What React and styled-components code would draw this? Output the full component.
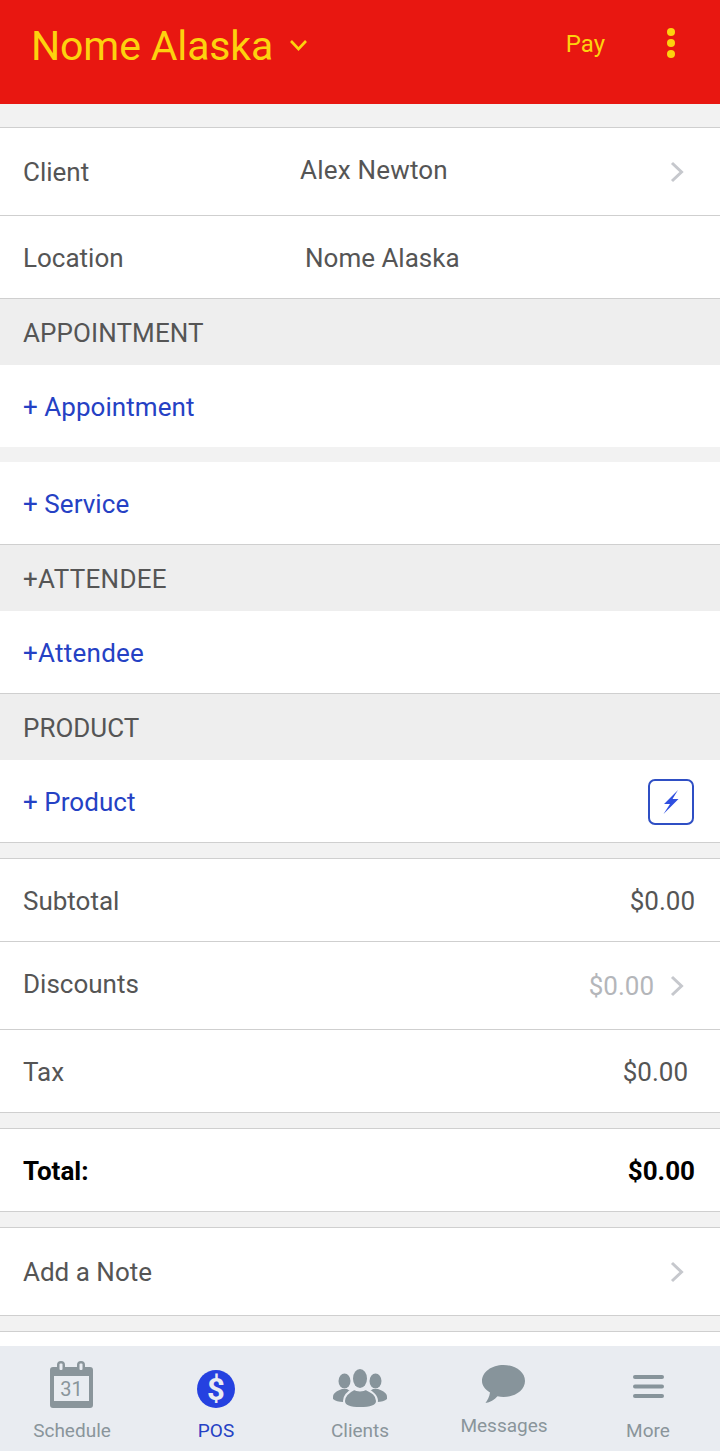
import styled, { createGlobalStyle } from "styled-components";

const GlobalStyle = createGlobalStyle`
  html, body { margin: 0; padding: 0; background: #f2f2f2; }
  * { box-sizing: border-box; }
  body { font-family: Roboto, "Liberation Sans", sans-serif; }
`;

const Screen = styled.div`
  width: 720px;
  height: 1451px;
  display: flex;
  flex-direction: column;
  overflow: hidden;
  background: #f2f2f2;
`;

const Header = styled.header`
  height: 104px;
  background: #e81711;
  color: #fdd20e;
  display: flex;
  align-items: flex-start;
  padding: 0 0 0 31px;
`;

const Title = styled.h1`
  margin: 23px 0 0;
  font-size: 41px;
  line-height: 46px;
  font-weight: 400;
  letter-spacing: -0.15px;
`;

const TitleCaret = styled.svg`
  width: 19px;
  height: 12px;
  margin: 39px 0 0 16px;
`;

const Pay = styled.span`
  margin: 30px 0 0 auto;
  font-size: 24px;
  line-height: 28px;
`;

const Dots = styled.div`
  width: 8px;
  margin: 28px 45px 0 62px;
  display: flex;
  flex-direction: column;
  gap: 3px;
  span {
    width: 8px;
    height: 8px;
    border-radius: 50%;
    background: #fdd20e;
  }
`;

const Gap = styled.div`
  height: ${(p) => p.$h}px;
  flex: none;
  background: ${(p) => p.$bg || "#f2f2f2"};
  border-bottom: ${(p) => (p.$line ? "1px solid #cfcfcf" : "none")};
`;

const Row = styled.div`
  height: ${(p) => p.$h || (p.$tall ? 88 : 83)}px;
  flex: none;
  background: #fff;
  display: flex;
  align-items: center;
  padding: ${(p) => (p.$tall ? 0 : 2)}px 25px 0 23px;
  font-size: 26px;
  color: #555;
  border-bottom: ${(p) => (p.$flat ? "none" : "1px solid #cfcfcf")};
`;

const Label = styled.span`
  width: ${(p) => p.$w || "auto"};
  flex: none;
  margin-top: ${(p) => p.$top || 0}px;
  font-weight: ${(p) => (p.$bold ? 700 : 400)};
  color: ${(p) => (p.$bold ? "#000" : "#555")};
`;

const Value = styled.span`
  margin-top: ${(p) => p.$top || 0}px;
  margin-left: ${(p) => (p.$right ? "auto" : "0")};
  margin-right: ${(p) => p.$mr || 0}px;
  letter-spacing: ${(p) => p.$track || 0}px;
  font-weight: ${(p) => (p.$bold ? 700 : 400)};
  color: ${(p) => (p.$bold ? "#000" : p.$muted ? "#b4b6ba" : "#555")};
`;

const AddLink = styled.span`
  color: #2541c4;
  letter-spacing: ${(p) => p.$track ?? 0.05}px;
`;

const Section = styled.div`
  height: 66px;
  flex: none;
  background: #eeeeee;
  display: flex;
  align-items: center;
  padding: 2px 0 0 23px;
  font-size: 26px;
  letter-spacing: ${(p) => p.$track ?? 0.1}px;
  color: #555;
`;

const Chevron = styled.svg`
  width: 14px;
  height: 22px;
  margin-left: ${(p) => (p.$auto ? "auto" : "16px")};
  margin-right: 11px;
`;

const QuickButton = styled.div`
  width: 46px;
  height: 46px;
  margin-left: auto;
  margin-right: 1px;
  border: 2px solid #2f4fc4;
  border-radius: 7px;
  display: flex;
  align-items: center;
  justify-content: center;
`;

const TabBar = styled.nav`
  height: 105px;
  flex: none;
  background: #e9ecf1;
  display: grid;
  grid-template-columns: repeat(5, 144px);
`;

const Tab = styled.div`
  position: relative;
  display: flex;
  flex-direction: column;
  align-items: center;
  color: ${(p) => (p.$active ? "#2541c4" : "#8a959b")};
`;

const TabIcon = styled.svg`
  margin-top: ${(p) => p.$top}px;
  margin-left: ${(p) => p.$shift || 0}px;
  width: ${(p) => p.$w}px;
  height: ${(p) => p.$h}px;
  flex: none;
`;

const TabText = styled.span`
  position: absolute;
  left: 0;
  right: 0;
  top: ${(p) => p.$top || 73}px;
  text-align: center;
  font-size: 19px;
  line-height: 24px;
`;

const Chev = ({ auto }) => (
  <Chevron $auto={auto} viewBox="0 0 14 22">
    <path d="M2 2 L11.5 11 L2 20" fill="none" stroke="#c6c8cd" strokeWidth="3" />
  </Chevron>
);

export default function App() {
  return (
    <Screen>
      <GlobalStyle />
      <Header>
        <Title>Nome Alaska</Title>
        <TitleCaret viewBox="0 0 19 12">
          <path d="M2 2 L9.5 10 L17 2" fill="none" stroke="#fdd20e" strokeWidth="2.6" />
        </TitleCaret>
        <Pay>Pay</Pay>
        <Dots>
          <span />
          <span />
          <span />
        </Dots>
      </Header>

      <Gap $h={24} $line />
      <Row $tall>
        <Label $w="277px">Client</Label>
        <Value $top={-4} $track={0.2}>Alex Newton</Value>
        <Chev auto />
      </Row>
      <Row>
        <Label $w="282px">Location</Label>
        <Value>Nome Alaska</Value>
      </Row>

      <Section>APPOINTMENT</Section>
      <Row $h={82} $flat>
        <AddLink>+ Appointment</AddLink>
      </Row>
      <Gap $h={15} />
      <Row>
        <AddLink>+ Service</AddLink>
      </Row>

      <Section $track={0.3}>+ATTENDEE</Section>
      <Row $h={82} $flat>
        <AddLink $track={0.25}>+Attendee</AddLink>
      </Row>
      <Gap $h={1} $bg="#cfcfcf" />

      <Section $track={0}>PRODUCT</Section>
      <Row>
        <AddLink>+ Product</AddLink>
        <QuickButton>
          <svg width="16" height="24" viewBox="0 0 16 24">
            <path d="M15 0 L1 14 L7 14 L0.5 24 L15.5 9 L9.5 9 Z" fill="#2f4fe0" />
          </svg>
        </QuickButton>
      </Row>

      <Gap $h={16} $line />
      <Row>
        <Label>Subtotal</Label>
        <Value $right>$0.00</Value>
      </Row>
      <Row $tall>
        <Label $top={-3}>Discounts</Label>
        <Value $right $muted>$0.00</Value>
        <Chev />
      </Row>
      <Row>
        <Label>Tax</Label>
        <Value $right $mr={7}>$0.00</Value>
      </Row>

      <Gap $h={16} $line />
      <Row>
        <Label $bold>Total:</Label>
        <Value $right $bold>$0.00</Value>
      </Row>

      <Gap $h={16} $line />
      <Row $tall>
        <Label>Add a Note</Label>
        <Chev auto />
      </Row>

      <Gap $h={16} $line />
      <Gap $h={14} $bg="#fff" />

      <TabBar>
        <Tab>
          <TabIcon $top={15} $shift={-1} $w={43} $h={47} viewBox="0 0 43 47">
            <path
              fillRule="evenodd"
              d="M3 6 H7 V4 a4 4 0 0 1 8 0 V6 H27 V4 a4 4 0 0 1 8 0 V6 H40 a3 3 0 0 1 3 3 V44 a3 3 0 0 1 -3 3 H3 a3 3 0 0 1 -3 -3 V9 a3 3 0 0 1 3 -3 Z M4 15 V40 H39 V15 Z"
              fill="#8a959b"
            />
            <rect x="9.5" y="2.5" width="3" height="6.5" rx="1" fill="#e9ecf1" />
            <rect x="29.5" y="2.5" width="3" height="6.5" rx="1" fill="#e9ecf1" />
            <text x="21.5" y="35" textAnchor="middle" fontSize="20" fontFamily="Roboto, sans-serif" fill="#8a959b">31</text>
          </TabIcon>
          <TabText>Schedule</TabText>
        </Tab>
        <Tab $active>
          <TabIcon $top={24} $w={38} $h={38} viewBox="0 0 38 38">
            <circle cx="19" cy="19" r="19" fill="#2541e0" />
            <text x="19" y="30" textAnchor="middle" fontSize="31" fontWeight="700" fontFamily="Roboto, sans-serif" fill="#e9ecf1">$</text>
          </TabIcon>
          <TabText>POS</TabText>
        </Tab>
        <Tab>
          <TabIcon $top={23} $w={54} $h={39} viewBox="0 0 54 39">
            <g fill="#87949b">
              <ellipse cx="11.5" cy="12" rx="6" ry="7.5" />
              <ellipse cx="42.5" cy="12" rx="6" ry="7.5" />
              <path d="M0 28 C0 24 4 22 9 20 H14 L20 24 L10 33 C6 33 2 32 0 30 Z" />
              <path d="M54 28 C54 24 50 22 45 20 H40 L34 24 L44 33 C48 33 52 32 54 30 Z" />
            </g>
            <ellipse cx="27" cy="9.5" rx="8.5" ry="11" fill="#e9ecf1" />
            <path
              d="M11 32 C11 26 15 23 21 20 C24 22 30 22 33 20 C39 23 44 26 44 32 C44 37 36 39 27 39 C18 39 11 37 11 32 Z"
              fill="#87949b"
              stroke="#e9ecf1"
              strokeWidth="2"
            />
            <ellipse cx="27" cy="9.5" rx="7" ry="9.5" fill="#87949b" />
          </TabIcon>
          <TabText>Clients</TabText>
        </Tab>
        <Tab>
          <TabIcon $top={19} $shift={-1} $w={43} $h={38} viewBox="0 0 43 38">
            <path
              d="M21.5 0 C33.4 0 43 7 43 16 C43 25 33.4 32 21.5 32 C19.5 32 17.5 31.8 15.5 31.3 C12.5 35 8 37.5 3.5 38 C5.5 35.5 7.5 31.5 8 27.5 C3 24.5 0 20.5 0 16 C0 7 9.6 0 21.5 0 Z"
              fill="#87949b"
            />
          </TabIcon>
          <TabText $top={68}>Messages</TabText>
        </Tab>
        <Tab>
          <TabIcon $top={29} $w={31} $h={23} viewBox="0 0 31 23">
            <g fill="#87949b">
              <rect x="0" y="0" width="31" height="4" rx="2" />
              <rect x="0" y="9.5" width="31" height="4" rx="2" />
              <rect x="0" y="19" width="31" height="4" rx="2" />
            </g>
          </TabIcon>
          <TabText>More</TabText>
        </Tab>
      </TabBar>
    </Screen>
  );
}
